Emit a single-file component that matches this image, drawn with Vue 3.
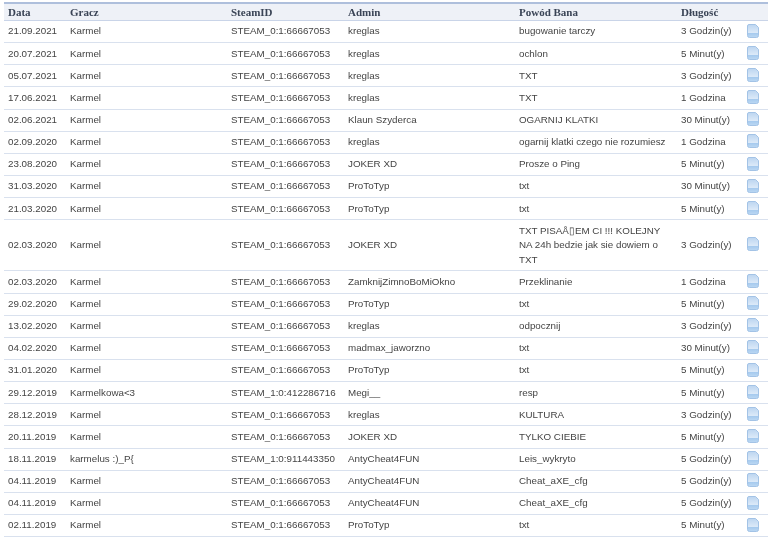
<script setup>
const raw = `21.09.2021|Karmel|STEAM_0:1:66667053|kreglas|bugowanie tarczy|3 Godzin(y)
20.07.2021|Karmel|STEAM_0:1:66667053|kreglas|ochlon|5 Minut(y)
05.07.2021|Karmel|STEAM_0:1:66667053|kreglas|TXT|3 Godzin(y)
17.06.2021|Karmel|STEAM_0:1:66667053|kreglas|TXT|1 Godzina
02.06.2021|Karmel|STEAM_0:1:66667053|Klaun Szyderca|OGARNIJ KLATKI|30 Minut(y)
02.09.2020|Karmel|STEAM_0:1:66667053|kreglas|ogarnij klatki czego nie rozumiesz|1 Godzina
23.08.2020|Karmel|STEAM_0:1:66667053|JOKER XD|Prosze o Ping|5 Minut(y)
31.03.2020|Karmel|STEAM_0:1:66667053|ProToTyp|txt|30 Minut(y)
21.03.2020|Karmel|STEAM_0:1:66667053|ProToTyp|txt|5 Minut(y)
02.03.2020|Karmel|STEAM_0:1:66667053|JOKER XD|TXT PISAÅ▯EM CI !!! KOLEJNY NA 24h bedzie jak sie dowiem o TXT|3 Godzin(y)
02.03.2020|Karmel|STEAM_0:1:66667053|ZamknijZimnoBoMiOkno|Przeklinanie|1 Godzina
29.02.2020|Karmel|STEAM_0:1:66667053|ProToTyp|txt|5 Minut(y)
13.02.2020|Karmel|STEAM_0:1:66667053|kreglas|odpocznij|3 Godzin(y)
04.02.2020|Karmel|STEAM_0:1:66667053|madmax_jaworzno|txt|30 Minut(y)
31.01.2020|Karmel|STEAM_0:1:66667053|ProToTyp|txt|5 Minut(y)
29.12.2019|Karmelkowa<3|STEAM_1:0:412286716|Megi__|resp|5 Minut(y)
28.12.2019|Karmel|STEAM_0:1:66667053|kreglas|KULTURA|3 Godzin(y)
20.11.2019|Karmel|STEAM_0:1:66667053|JOKER XD|TYLKO CIEBIE|5 Minut(y)
18.11.2019|karmelus :)_P{|STEAM_1:0:911443350|AntyCheat4FUN|Leis_wykryto|5 Godzin(y)
04.11.2019|Karmel|STEAM_0:1:66667053|AntyCheat4FUN|Cheat_aXE_cfg|5 Godzin(y)
04.11.2019|Karmel|STEAM_0:1:66667053|AntyCheat4FUN|Cheat_aXE_cfg|5 Godzin(y)
02.11.2019|Karmel|STEAM_0:1:66667053|ProToTyp|txt|5 Minut(y)`
const rows = raw.split('\n').map(l => l.split('|'))
const heads = ['Data', 'Gracz', 'SteamID', 'Admin', 'Powód Bana', 'Długość', '']
</script>

<template>
  <div class="page">
    <table class="bans">
      <colgroup>
        <col class="c1" /><col class="c2" /><col class="c3" /><col class="c4" /><col class="c5" /><col class="c6" /><col class="c7" />
      </colgroup>
      <thead>
        <tr><th v-for="(h, i) in heads" :key="i">{{ h }}</th></tr>
      </thead>
      <tbody>
        <tr v-for="(r, i) in rows" :key="i">
          <td v-for="(c, j) in r" :key="j">{{ c }}</td>
          <td>
            <svg class="doc" width="12" height="14" viewBox="0 0 12 14">
              <defs>
                <linearGradient id="docfill" x1="0" y1="0" x2="0" y2="1">
                  <stop offset="0" stop-color="#bcd5f0" />
                  <stop offset="0.62" stop-color="#dbe9f8" />
                  <stop offset="0.68" stop-color="#a6caee" />
                  <stop offset="1" stop-color="#bcd8f3" />
                </linearGradient>
              </defs>
              <path d="M2 .5H8.5L11.5 3.5V11.5a2 2 0 0 1-2 2H2.5a2 2 0 0 1-2-2V2A1.5 1.5 0 0 1 2 .5Z" fill="url(#docfill)" stroke="#a3c3e6" />
            </svg>
          </td>
        </tr>
      </tbody>
    </table>
  </div>
</template>

<style scoped>
.page {
  width: 776px;
  height: 550px;
  padding: 2px 0 0 4px;
  box-sizing: border-box;
  overflow: hidden;
  background: #fff;
}
.bans {
  width: 764px;
  table-layout: fixed;
  border-collapse: separate;
  border-spacing: 0;
  font-family: "Liberation Sans", Arial, sans-serif;
  font-size: 9.8px;
  color: #444;
  filter: blur(0.3px);
}
.c1 { width: 62px; }
.c2 { width: 161px; }
.c3 { width: 117px; }
.c4 { width: 171px; }
.c5 { width: 162px; }
.c6 { width: 66px; }
.c7 { width: 25px; }
th {
  height: 16px;
  padding: 0 4px;
  text-align: left;
  font-family: "Liberation Serif", "Times New Roman", serif;
  font-size: 11px;
  font-weight: bold;
  color: #3a4456;
  background: #eef1f7;
  border-top: 2px solid #aebfdc;
  border-bottom: 1px solid #c9d4e8;
}
td {
  padding: 3.38px 4px;
  line-height: 14.4px;
  vertical-align: middle;
  border-bottom: 1px solid #d9e1ee;
}
.doc {
  display: block;
  margin: -2px 0 0;
}
</style>
